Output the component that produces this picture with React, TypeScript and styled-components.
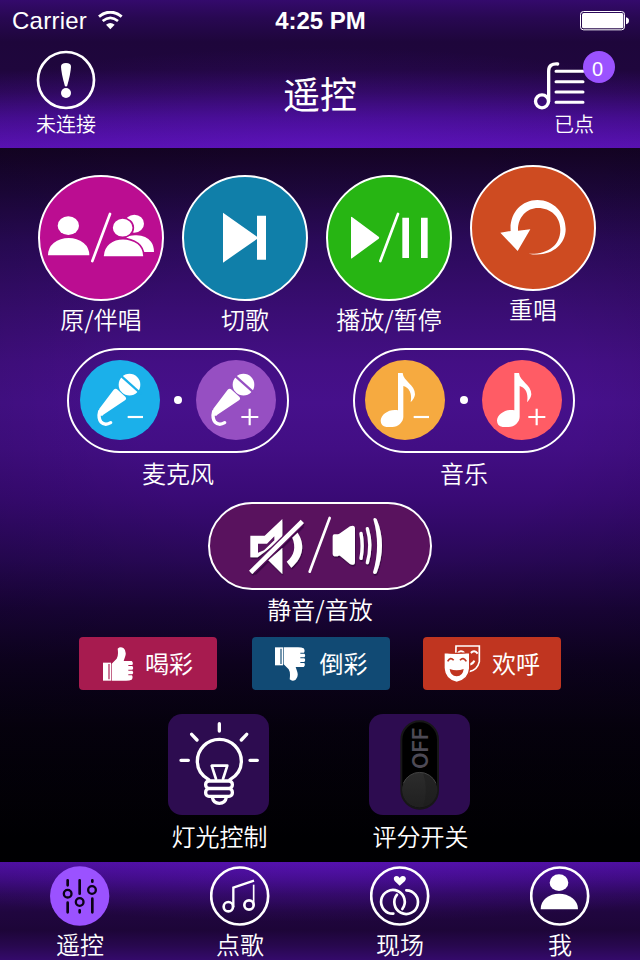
import React from "react";
import styled, { createGlobalStyle } from "styled-components";

const GlobalStyle = createGlobalStyle`
  * { box-sizing: border-box; }
  body {
    margin: 0;
    background: #000;
    color: #fff;
    font-family: "Noto Sans CJK SC", sans-serif;
  }
  button { font: inherit; color: inherit; padding: 0; cursor: pointer; }
  svg { display: block; flex: none; }
`;

const Screen = styled.div`
  width: 640px;
  height: 960px;
  display: flex;
  flex-direction: column;
  overflow: hidden;
`;

const Header = styled.header`
  height: 148px;
  flex: none;
  background:
    radial-gradient(ellipse 480px 100px at 50% 100%, rgba(104, 22, 212, 0.32), transparent),
    linear-gradient(#340a6c 0, #280852 18px, #1e063b 42px, #1f063d 70px, #2b0857 92px, #410c88 118px, #5711ae 148px);
`;

const StatusBar = styled.div`
  height: 40px;
  padding: 1px 11px 0 12px;
  display: grid;
  grid-template-columns: 1fr auto 1fr;
  align-items: center;
  font: 24px/39px "Liberation Sans", Arial, sans-serif;
`;

const Carrier = styled.div`
  display: flex;
  align-items: center;
  gap: 11px;
  letter-spacing: 0.25px;
`;

const Clock = styled.div`
  font-weight: 700;
`;

const BatteryBox = styled.div`
  display: flex;
  justify-content: flex-end;
`;

const NavBar = styled.div`
  height: 108px;
  padding: 0 25px 0 36px;
  display: grid;
  grid-template-columns: 247px 1fr 247px;
  align-items: start;
`;

const NavAction = styled.button<{ $end?: boolean }>`
  border: 0;
  background: none;
  position: relative;
  padding-top: 10px;
  justify-self: ${(p) => (p.$end ? "end" : "start")};
  display: flex;
  flex-direction: column;
  align-items: ${(p) => (p.$end ? "flex-start" : "center")};
`;

const NavLabel = styled.span<{ $indent?: number }>`
  font-size: 20px;
  line-height: 28px;
  font-weight: 350;
  margin-left: ${(p) => p.$indent ?? 0}px;
`;

const Title = styled.h1`
  margin: 26px 11px 0 0;
  text-align: center;
  white-space: nowrap;
  font-size: 37px;
  line-height: 54px;
  font-weight: 400;
`;

const Badge = styled.span`
  position: absolute;
  right: 0;
  top: 11px;
  width: 32px;
  height: 32px;
  border-radius: 50%;
  background: #9b52ff;
  font: 20px/36px "Liberation Sans", Arial, sans-serif;
  text-align: center;
  padding-right: 3px;
`;

const Main = styled.main`
  height: 714px;
  flex: none;
  display: flex;
  flex-direction: column;
  background:
    radial-gradient(ellipse 560px 440px at 56% 34%, transparent 40%, rgba(0, 0, 10, 0.22) 100%),
    linear-gradient(#150325 0, #1e073d 45px, #2b0a5a 95px, #390d72 160px, #430f84 215px, #46108b 255px, #420e84 300px, #390a75 350px, #290858 410px, #1a0439 460px, #0e021f 515px, #06010d 580px, #000 690px);
`;

const Label = styled.span`
  font-size: 24px;
  line-height: 36px;
  font-weight: 350;
  white-space: nowrap;
  margin-top: -1px;
`;

const PlaybackRow = styled.div`
  height: 200px;
  padding: 27px 35px 0 29px;
  display: grid;
  grid-template-columns: repeat(4, 144px);
  align-items: start;
`;

const Control = styled.div<{ $raised?: boolean }>`
  display: flex;
  flex-direction: column;
  align-items: center;
  margin-top: ${(p) => (p.$raised ? -10 : 0)}px;
`;

const RoundButton = styled.button<{ $color: string }>`
  width: 126px;
  height: 126px;
  margin-bottom: 1px;
  border: 2px solid #fff;
  border-radius: 50%;
  background: ${(p) => p.$color};
`;

const LevelRow = styled.div`
  height: 154px;
  padding: 0 65px 0 67px;
  display: flex;
  justify-content: space-between;
  align-items: flex-start;
`;

const Pill = styled.div<{ $left: number; $gap: number }>`
  width: 222px;
  height: 105px;
  padding: 10px 0 0 ${(p) => p.$left}px;
  border: 2px solid #fff;
  border-radius: 53px;
  display: flex;
  align-items: flex-start;
  gap: ${(p) => p.$gap}px;
  margin-bottom: 3px;
`;

const LevelButton = styled.button<{ $color: string }>`
  width: 80px;
  height: 80px;
  border: 0;
  border-radius: 50%;
  background: ${(p) => p.$color};
`;

const Dot = styled.i`
  width: 8px;
  height: 8px;
  margin-top: 36px;
  border-radius: 50%;
  background: #fff;
`;

const MuteRow = styled.div`
  height: 135px;
  display: flex;
  flex-direction: column;
  align-items: center;
`;

const MuteButton = styled.button`
  width: 224px;
  height: 88px;
  margin-bottom: 2px;
  border: 2px solid #fff;
  border-radius: 44px;
  background: #59125e;
`;

const CheerRow = styled.div`
  height: 77px;
  padding: 0 79px;
  display: flex;
  align-items: flex-start;
  justify-content: space-between;
`;

const CheerButton = styled.button<{ $color: string; $gap: number; $shift?: number }>`
  width: 138px;
  height: 53px;
  border: 0;
  border-radius: 4px;
  display: flex;
  align-items: center;
  justify-content: center;
  gap: ${(p) => p.$gap}px;
  margin-left: ${(p) => p.$shift ?? 0}px;
  background: ${(p) => p.$color};
`;

const CheerText = styled.span`
  font-size: 24px;
  line-height: 36px;
  margin-bottom: 2px;
  font-weight: 400;
`;

const TileRow = styled.div`
  display: flex;
  justify-content: center;
  gap: 105px;
`;

const Tile = styled.button`
  width: 101px;
  height: 101px;
  margin: 0 2px 4px 0;
  border: 0;
  border-radius: 14px;
  background: #2d0c50;
`;

const TileControl = styled(Control)`
  width: 96px;
`;

const TabBar = styled.nav`
  height: 98px;
  flex: none;
  display: grid;
  grid-template-columns: repeat(4, 160px);
  background:
    radial-gradient(ellipse 460px 60px at 50% 0, rgba(104, 22, 212, 0.35), transparent),
    linear-gradient(#4b0f9b 0, #3c0b7d 16px, #2b0858 32px, #20063f 50px, #1d0538 68px, #28084f 84px, #340a6b 98px);
`;

const Tab = styled.button`
  border: 0;
  background: none;
  display: flex;
  flex-direction: column;
  align-items: center;
  gap: 1px;
  padding-top: 4px;
`;

const WifiIcon = () => (
  <svg width="25" height="19" viewBox="295 32 75 57" fill="none" stroke="#fff">
    <path d="M298 49Q332 22 366 49" strokeWidth="9" />
    <path d="M309 62Q332 43 355 62" strokeWidth="8" />
    <path d="M319 73Q332 63 345 73L332 87Z" fill="#fff" stroke="none" />
  </svg>
);

const BatteryIcon = () => (
  <svg width="49" height="20" viewBox="780 32 147 60">
    <rect x="781.5" y="33.500" width="132" height="55" rx="9" fill="none" stroke="#fff" strokeWidth="3" />
    <rect x="786" y="38" width="124" height="46" rx="5" fill="#fff" />
    <path d="M918 51q9 2 9 10t-9 11z" fill="#fff" />
  </svg>
);

const AlertIcon = () => (
  <svg width="60" height="60" viewBox="108 150 180 180">
    <circle cx="198" cy="240" r="84" fill="none" stroke="#fff" strokeWidth="8" />
    <path d="M183 200Q183 189 198 189T213 200Q212 220 202 256Q198 264 194 256Q184 220 183 200Z" fill="#fff" />
    <circle cx="198" cy="279" r="15" fill="#fff" />
  </svg>
);

const PlaylistIcon = () => (
  <svg width="82" height="60" viewBox="639 150 246 180" fill="none" stroke="#fff" strokeWidth="9" strokeLinecap="round">
    <circle cx="666" cy="304" r="19.500" strokeWidth="10" />
    <path d="M686 304V213Q686 190 713 192" strokeWidth="10" />
    <path d="M708 214H789M708 245H789M708 276H789M708 307H789" />
  </svg>
);

const SingersIcon = () => (
  <svg width="122" height="122" viewBox="60 51 366 366" fill="#fff">
    <ellipse cx="145" cy="197" rx="32" ry="28" />
    <path d="M84 286Q84 263 101 249Q121 234 146 234T191 249Q208 263 208 286Z" />
    <path d="M270 162L217 303" stroke="#fff" strokeWidth="8" strokeLinecap="round" />
    <ellipse cx="343" cy="191" rx="29" ry="27" />
    <path d="M318 231Q331 225 350 226Q379 227 393 245Q402 257 402 276H370Z" />
    <g stroke="#bb0d91" strokeWidth="5">
      <ellipse cx="308" cy="203" rx="32" ry="29" />
      <path d="M249 291Q249 265 267 250Q285 236 309 236T354 250Q372 264 372 291Z" />
    </g>
  </svg>
);

const NextIcon = () => (
  <svg width="122" height="122" viewBox="492 51 366 366" fill="#fff">
    <path d="M609 158L711 230V167H738V299H711V237L609 308Z" />
  </svg>
);

const PlayPauseIcon = () => (
  <svg width="122" height="122" viewBox="24 51 366 366" fill="#fff">
    <path d="M93 172Q94 169 97 172L176 230Q179 233 176 236L97 294Q94 297 93 294Z" />
    <path d="M234 162L181 303" stroke="#fff" strokeWidth="8" strokeLinecap="round" />
    <path d="M247 173H267V294H247ZM303 173H323V294H303Z" />
  </svg>
);

const ReplayIcon = () => (
  <svg width="122" height="122" viewBox="456 21 366 366" fill="#fff">
    <path d="M541 218L572 213C568 160 604 120 652 120C700 120 737 158 737 208C737 256 690 294 626 281C680 284 721 258 721 209C721 170 692 144 654 144C620 144 593 172 594 212L631 208L593 273Z" />
  </svg>
);

const Sign = ({ x, y, plus }: { x: number; y: number; plus: boolean }) => (
  <path
    d={plus ? `M${x - 25} ${y}H${x + 26}M${x} ${y - 25}V${y + 25}` : `M${x - 23} ${y}H${x + 23}`}
    stroke="#fff"
    strokeWidth="6.500"
  />
);

const MicIcon = ({ plus = false, gap }: { plus?: boolean; gap: string }) => (
  <svg width="80" height="80" viewBox={plus ? "98 60 240 240" : "90 60 240 240"} fill="#fff">
    <g transform={plus ? "translate(2 0)" : undefined}>
      <circle cx="238.500" cy="134" r="32.500" />
      <path d="M208 103L274 162" stroke={gap} strokeWidth="7" />
      <path d="M191 149Q197 143 203 149L226 170Q231 176 225 181L160 224Q157 230 148 226Q144 219 148 206Z" />
      <path d="M149 214Q144 234 153 246Q165 258 182 248" fill="none" stroke="#fff" strokeWidth="10" strokeLinecap="round" />
    </g>
    <Sign x={plus ? 259 : 256} y={231} plus={plus} />
  </svg>
);

const NoteIcon = ({ plus = false }: { plus?: boolean }) => (
  <svg width="80" height="80" viewBox={plus ? "77 60 240 240" : "75 60 240 240"} fill="#fff">
    <path d="M174 99H188C190 124 225 134 225 163Q224 176 212 187C217 160 208 143 190 138V231C190 246 174 261 157 261H139C128 259 122 252 122 242C122 222 150 205 174 211Z" />
    <Sign x={plus ? 241 : 244} y={231} plus={plus} />
  </svg>
);

const MuteIcon = () => (
  <svg width="220" height="84" viewBox="60 42 660 252">
    <defs>
      <filter id="speakerShadow" x="-10%" y="-10%" width="120%" height="120%">
        <feDropShadow dx="2" dy="5" stdDeviation="1.500" floodColor="#250035" floodOpacity="0.75" />
      </filter>
    </defs>
    <g fill="#fff" filter="url(#speakerShadow)">
      <path d="M181 137H224L277 87V146L203 202H181Z" />
      <path d="M204 161H231L253 139V151L222 181L204 188Z" fill="#59125e" />
      <path d="M235 211L277 174V252Z" />
      <path d="M323 128C345 162 342 200 304 233L290 215C314 196 318 170 307 143Z" />
      <path d="M332 99L187 242" stroke="#59125e" strokeWidth="22" />
      <path d="M332 99L187 242" stroke="#fff" strokeWidth="14" strokeLinecap="square" />
    </g>
    <g fill="#fff" filter="url(#speakerShadow)">
      <path d="M433 133H443Q447 133 450 130L480 109Q495 103 495 116V215Q495 228 480 222L450 197Q447 195 443 199H433Q428 198 428 192V139Q428 133 433 133Z" />
      <path d="M513 130Q520 167 513 205M532 116Q547 165 532 218" fill="none" stroke="#fff" strokeWidth="10" strokeLinecap="round" />
      <path d="M550 88Q552 80 560 87Q592 165 560 249Q551 256 549 247Q573 167 550 88Z" />
    </g>
    <path d="M419 84L359 245" stroke="#fff" strokeWidth="8" strokeLinecap="round" />
  </svg>
);

const ThumbIcon = ({ down = false }: { down?: boolean }) => (
  <svg width="31" height="34" viewBox="129 64 93 102" fill="#fff">
    <g transform={down ? "matrix(1 0 0 -1 0 230)" : undefined}>
      <path d="M129 111H153V165H129Z" />
      <path d="M147 115V161" stroke={down ? "#114a74" : "#a71b4f"} strokeWidth="3.500" />
      <path d="M155 114L170 99Q176 90 173 69Q181 61 191 68Q200 76 196 91L191 106H215Q221 111 217 118H205V121H217Q222 127 217 132H205V135H217Q222 141 217 146H205V149H216Q220 155 215 162Q207 166 193 165H155Z" />
    </g>
  </svg>
);

const MasksIcon = () => (
  <svg width="37" height="37" viewBox="372 62 111 111" fill="none">
    <path d="M408 65H478V112Q472 138 447 142L407 110Z" stroke="#fff" strokeWidth="5" />
    <path d="M413 88Q422 74 433 86M452 86Q463 74 473 88M448 121Q460 118 463 109" stroke="#fff" strokeWidth="6" />
    <path d="M372 85Q410 89 449 85V133Q446 168 410 174Q375 168 372 133Z" fill="#fff" stroke="#c03520" strokeWidth="4" />
    <path d="M383 111Q391 96 401 108M420 108Q430 96 439 111" stroke="#c03520" strokeWidth="5" />
    <path d="M389 134Q410 142 431 134Q429 155 410 156Q391 155 389 134Z" fill="#c03520" />
  </svg>
);

const BulbIcon = () => (
  <svg width="101" height="101" viewBox="54 42 303 303" fill="none" stroke="#fff" strokeWidth="10" strokeLinecap="round" strokeLinejoin="round">
    <path d="M208 71V93M125 103L141 120M290 103L274 120M93 181H115M300 181H322" />
    <path d="M176 239C152 225 142 204 142 184A66 66 0 0 1 274 184C274 204 264 225 240 239" />
    <path d="M198 237L185 197H232L219 237" strokeWidth="8" />
    <rect x="167" y="243" width="80" height="22" rx="10" />
    <rect x="167" y="266" width="80" height="23" rx="10" />
    <path d="M187 292Q190 310 208 310T229 292" />
  </svg>
);

const SwitchIcon = () => (
  <svg width="101" height="101" viewBox="657 42 303 303">
    <defs>
      <linearGradient id="knob" x2="0" y2="1">
        <stop stopColor="#2c2c2c" />
        <stop offset="1" stopColor="#202020" />
      </linearGradient>
    </defs>
    <rect x="754" y="64" width="110" height="262" rx="55" fill="#000" stroke="#171717" strokeWidth="6" />
    <circle cx="809" cy="270" r="53" fill="url(#knob)" />
    <path d="M819 218A53 53 0 0 1 819 322Q837 270 819 218Z" fill="#1b1b1b" opacity="0.5" />
    <path d="M760 250A53 53 0 0 1 858 250" fill="none" stroke="#424242" strokeWidth="3" />
    <text transform="translate(833 207) rotate(-90)" fontFamily="Inter, sans-serif" fontWeight="600" fontSize="64" textLength="125" lengthAdjust="spacingAndGlyphs" fill="#4d4a55">OFF</text>
  </svg>
);

const TabRing = () => <circle cx="719" cy="138" r="85.500" stroke="#fff" strokeWidth="8" fill="none" />;

const MixerIcon = () => (
  <svg width="60" height="60" viewBox="150 48 180 180" fill="none" stroke="#0b0216" strokeLinecap="round">
    <circle cx="239" cy="138" r="89" fill="#9b52ff" stroke="none" />
    <path d="M203 91V106M203 158V187M239 91V131M239 181V187M277 91V95M277 146V187" strokeWidth="8" />
    <g strokeWidth="7">
      <circle cx="203" cy="131" r="11.500" />
      <circle cx="239" cy="156" r="11.500" />
      <circle cx="276" cy="120" r="11.500" />
    </g>
  </svg>
);

const SongsIcon = () => (
  <svg width="60" height="60" viewBox="630 48 180 180" fill="none" stroke="#fff">
    <TabRing />
    <g strokeWidth="7">
      <circle cx="685" cy="170" r="14" strokeWidth="8" />
      <circle cx="747" cy="165" r="14" strokeWidth="8" />
      <path d="M700 172V113L762 92" />
      <path d="M761 104V166" strokeWidth="5" />
    </g>
  </svg>
);

const RingsIcon = () => (
  <svg width="60" height="60" viewBox="150 48 180 180" fill="none" stroke="#fff">
    <circle cx="239" cy="138" r="85.500" strokeWidth="8" />
    <path d="M239 107L224 93Q218 83 226 79Q234 75 239 84Q244 75 253 79Q261 84 255 93Z" fill="#fff" stroke="none" />
    <g strokeWidth="8" strokeLinecap="round">
      <path d="M220 191A35.500 35.500 0 1 1 247 177" />
      <path d="M231 134A35.500 35.500 0 1 0 259 121" />
    </g>
  </svg>
);

const ProfileIcon = () => (
  <svg width="60" height="60" viewBox="630 48 180 180" fill="#fff">
    <TabRing />
    <ellipse cx="717" cy="98" rx="28" ry="25" />
    <path d="M662 178Q662 157 678 144Q694 131 717 131T757 144Q774 157 774 178Z" />
  </svg>
);

const playback = [
  { label: "原/伴唱", color: "#bb0d91", icon: <SingersIcon /> },
  { label: "切歌", color: "#107fa9", icon: <NextIcon /> },
  { label: "播放/暂停", color: "#27b513", icon: <PlayPauseIcon /> },
  { label: "重唱", color: "#ce4b21", icon: <ReplayIcon />, raised: true },
];

const tabs = [
  { label: "遥控", icon: <MixerIcon /> },
  { label: "点歌", icon: <SongsIcon /> },
  { label: "现场", icon: <RingsIcon /> },
  { label: "我", icon: <ProfileIcon /> },
];

export default function App() {
  return (
    <>
      <GlobalStyle />
      <Screen>
        <Header>
          <StatusBar>
            <Carrier>Carrier <WifiIcon /></Carrier>
            <Clock>4:25 PM</Clock>
            <BatteryBox><BatteryIcon /></BatteryBox>
          </StatusBar>
          <NavBar>
            <NavAction>
              <AlertIcon />
              <NavLabel>未连接</NavLabel>
            </NavAction>
            <Title>遥控</Title>
            <NavAction $end>
              <PlaylistIcon />
              <Badge>0</Badge>
              <NavLabel $indent={21}>已点</NavLabel>
            </NavAction>
          </NavBar>
        </Header>

        <Main>
          <PlaybackRow>
            {playback.map((item) => (
              <Control key={item.label} $raised={item.raised}>
                <RoundButton $color={item.color}>{item.icon}</RoundButton>
                <Label>{item.label}</Label>
              </Control>
            ))}
          </PlaybackRow>

          <LevelRow>
            <Control>
              <Pill $left={11} $gap={14}>
                <LevelButton $color="#1bb0ea"><MicIcon gap="#1bb0ea" /></LevelButton>
                <Dot />
                <LevelButton $color="#964fc2"><MicIcon plus gap="#964fc2" /></LevelButton>
              </Pill>
              <Label>麦克风</Label>
            </Control>
            <Control>
              <Pill $left={10} $gap={14.5}>
                <LevelButton $color="#f6aa40"><NoteIcon /></LevelButton>
                <Dot />
                <LevelButton $color="#ff5c65"><NoteIcon plus /></LevelButton>
              </Pill>
              <Label>音乐</Label>
            </Control>
          </LevelRow>

          <MuteRow>
            <MuteButton><MuteIcon /></MuteButton>
            <Label>静音/音放</Label>
          </MuteRow>

          <CheerRow>
            <CheerButton $color="#a71b4f" $gap={11}><ThumbIcon /><CheerText>喝彩</CheerText></CheerButton>
            <CheerButton $color="#114a74" $gap={14} $shift={2}><ThumbIcon down /><CheerText>倒彩</CheerText></CheerButton>
            <CheerButton $color="#c03520" $gap={11}><MasksIcon /><CheerText>欢呼</CheerText></CheerButton>
          </CheerRow>

          <TileRow>
            <TileControl>
              <Tile><BulbIcon /></Tile>
              <Label>灯光控制</Label>
            </TileControl>
            <TileControl>
              <Tile><SwitchIcon /></Tile>
              <Label>评分开关</Label>
            </TileControl>
          </TileRow>
        </Main>

        <TabBar>
          {tabs.map((tab) => (
            <Tab key={tab.label}>
              {tab.icon}
              <Label>{tab.label}</Label>
            </Tab>
          ))}
        </TabBar>
      </Screen>
    </>
  );
}
